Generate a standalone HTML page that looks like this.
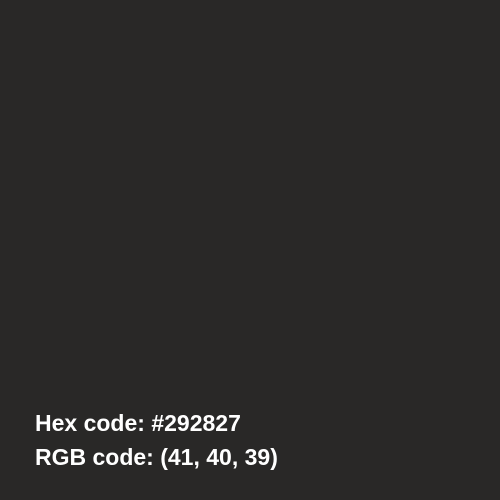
<!DOCTYPE html>
<html><head><style>
html,body{margin:0;padding:0;width:500px;height:500px;background:#292827;overflow:hidden}
.t{position:absolute;left:35px;color:#fff;font-family:"Liberation Sans",sans-serif;font-weight:bold;font-size:23px;line-height:1;white-space:nowrap}
</style></head><body>
<div class="t" style="top:412px">Hex code: #292827</div>
<div class="t" style="top:446px">RGB code: (41, 40, 39)</div>
</body></html>
